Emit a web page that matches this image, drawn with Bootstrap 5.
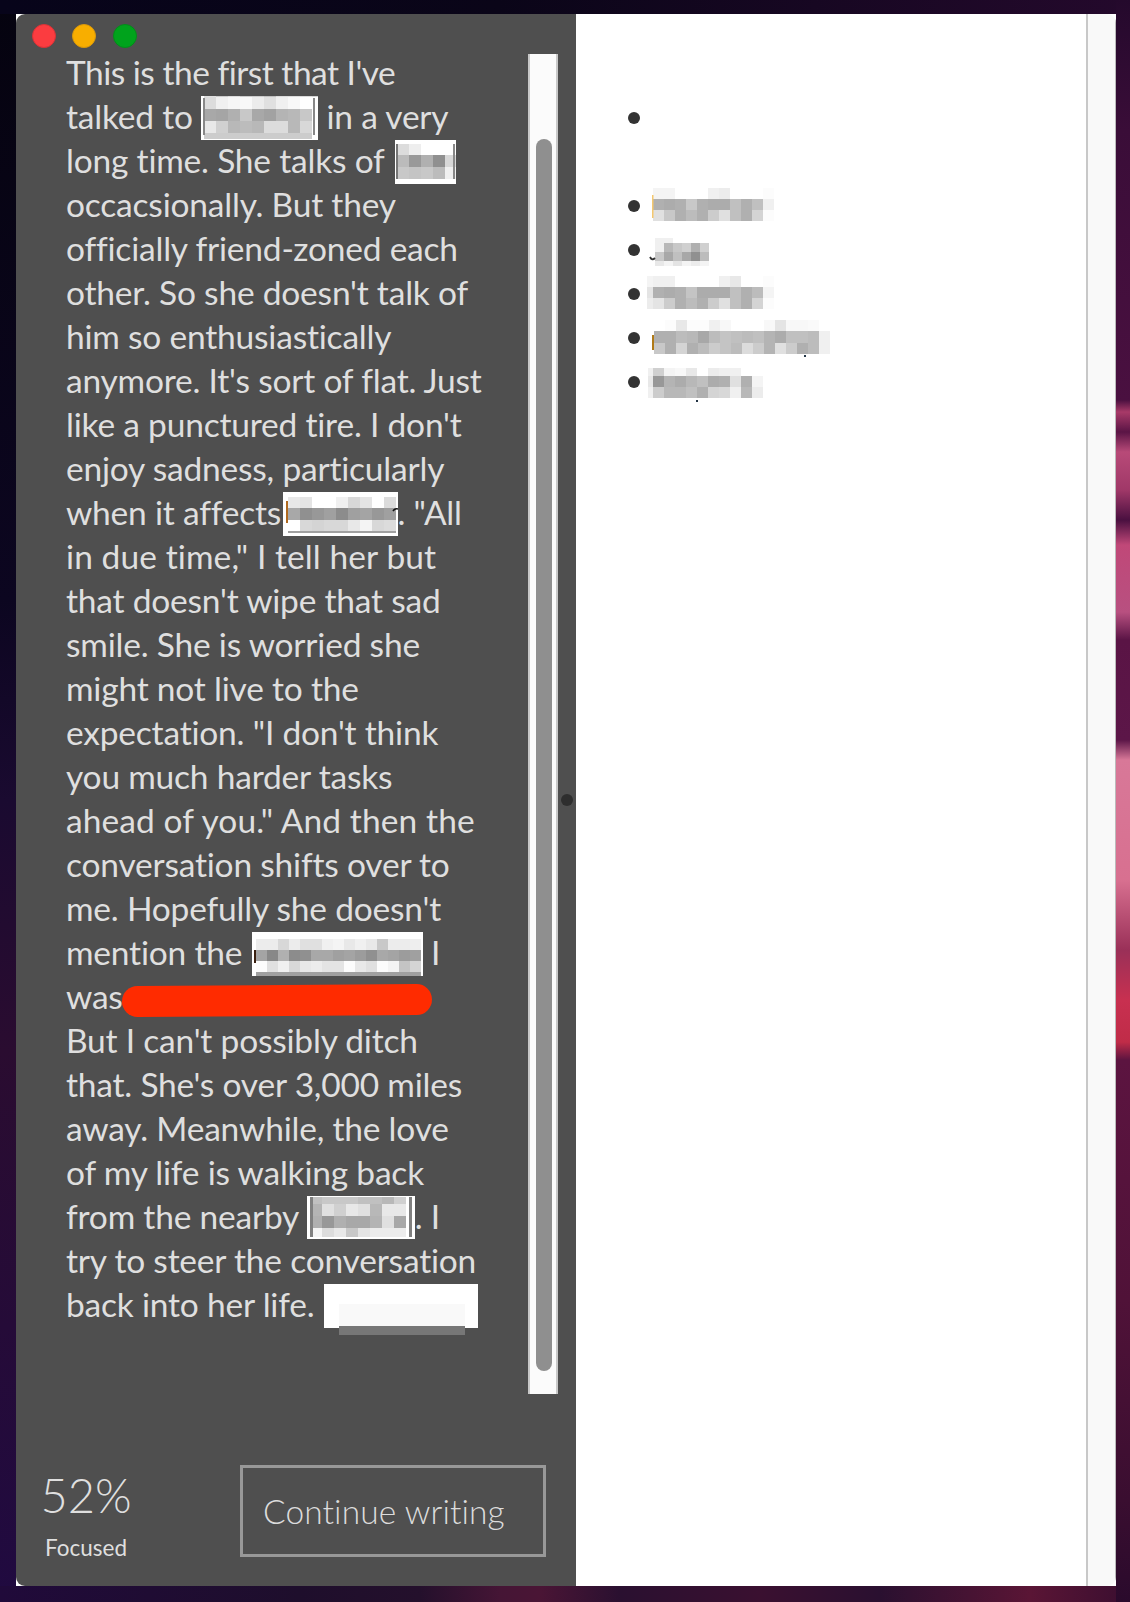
<!DOCTYPE html>
<html lang="en">
<head>
<meta charset="utf-8">
<title>Focused writing</title>
<link href="https://cdn.jsdelivr.net/npm/bootstrap@5.3.0/dist/css/bootstrap.min.css" rel="stylesheet">
<style>
html,body{height:1602px;overflow:hidden}
body{margin:0;padding:14px 0 0 16px;background:
 linear-gradient(to bottom,#24092c 0,#3a0d38 130px,#4a1040 400px,#a83a68 412px,#5a1445 432px,#b84a78 452px,#a03868 490px,#4a1040 520px,#c04878 545px,#b85080 612px,#5a1445 640px,#5c1648 740px,#d87898 760px,#d87090 880px,#9a3058 950px,#c83050 1000px,#c02c48 1042px,#5c1440 1060px,#501238 1300px,#3a0e30 1500px,#2a0a2c 1602px) right top/14px 100% no-repeat,
 linear-gradient(to right,#200a3a 0,#1e0e2c 300px,#24102c 420px,#451535 500px,#4a1535 540px,#2a1030 620px,#3a1030 760px,#2a1030 880px,#5a1535 1030px,#3a0e30 1130px) left bottom/100% 16px no-repeat,
 linear-gradient(to right,#07041a 0,#0a0518 500px,#24092c 1130px) left top/100% 14px no-repeat,
 linear-gradient(to bottom,#05030f 0,#0c0620 600px,#1a0a30 800px,#2a0c30 1050px,#200a40 1602px) left top/16px 100% no-repeat;
 font-family:"Lato","Liberation Sans",sans-serif}
.app-win{width:1100px;height:1572px;border-radius:9px;overflow:hidden}
.write-pane{width:560px;background:#4f4f4f;color:#dfdfdf}
.lights{padding:10px 0 0 16px;height:38px;gap:16.4px}
.light{width:24px;height:24px;border-radius:50%;display:block}
.l-red{background:#fb3c40;border:1px solid #d93236}
.l-yel{background:#f8ae00;border:1px solid #d9980a}
.l-grn{background:#00a31c;border:1px solid #038c1a}
.story-row{height:1342px}
.story{width:512px;padding-left:50px;margin:-2px 0 0;font-size:33.5px;line-height:44px;white-space:nowrap;letter-spacing:-.2px}
.ls-t{letter-spacing:-.5px}
.ls-l{letter-spacing:.1px}
.mos{display:inline-block;vertical-align:top}
.story .mos{margin:2px 0 -2px}
.story .mos.m2{margin-left:3px}
.story .mos.m3{margin-left:-7px}
.story .mos.m4{margin-left:1px}
.story .mos.m6{margin-left:1px}
.mos-over{overflow:visible}
.pill-red{left:106px;top:935px;width:310px;height:31px;border-radius:16px;background:#ff2b00;transform:rotate(-.4deg)}
.track{width:30px;height:1340px;margin-top:2px;background:#fbfbfb;border-left:2px solid #c8c8c8;border-right:2px solid #c8c8c8;padding:85px 0 0 6px}
.thumb{width:16px;height:1232px;background:#8f8f8f;border-radius:8px}
.knob{left:545px;top:780px;width:12px;height:12px;border-radius:50%;background:#2e2e2e}
.foot{padding:0 30px 20px 10px}
.stat{width:152px;height:101px;font-weight:300;padding-right:32px;padding-top:2px}
.stat-num{font-size:47px;line-height:56px}
.stat-lab{font-size:22.5px;line-height:30px;margin-top:10px;font-weight:400}
.go-btn{width:306px;height:92px;border:3px solid #989898;border-radius:0;color:#dcdcdc;font-size:33.5px;font-weight:300;background:transparent;letter-spacing:.1px;padding:0 0 0 20px;text-align:left}
.note-pane{width:510px;padding:82px 0 0 52px;color:#333}
.note-row{height:44px}
.bul{width:12px;height:12px;border-radius:50%;background:#333;flex:none;margin-right:2px}
.note-gap{height:44px}
.rail{flex:1;background:#f9f9f9;border-left:2px solid #c8c8c8;border-right:1px solid #bbb}
</style>
</head>
<body>
<div class="app-win d-flex bg-white">
  <div class="write-pane d-flex flex-column position-relative">
    <div class="lights d-flex">
      <span class="light l-red"></span><span class="light l-yel"></span><span class="light l-grn"></span>
    </div>
    <div class="story-row d-flex">
      <p class="story position-relative"><span class="ls-t">This is the first that I've</span><br>
talked to <svg class="mos" width="117" height="44" data-x="3" data-c="12" data-h="1,12,12,12,6" data-g="e0ccdcccccc0dcdcdcd4|dcf0f6f8ece0f0f8ff|a8a5b0c8a8a2b4b8c8|e8d0b8bcb8dcdcb8d8|cccccccccccccccccc"><rect x="2" y="2" width="2" height="37" fill="#888"/><rect x="112" y="2" width="2" height="37" fill="#888"/></svg> in a very<br>
long time. She talks of <svg class="mos m2" width="61" height="44" data-x="2" data-c="12" data-h="4,11,12,12" data-g="ffffffffff|dceeffffff|bb99b090d8|c8c4c8bcf0"><rect x="1" y="4" width="2" height="35" fill="#777"/><rect x="58" y="4" width="2" height="35" fill="#888"/></svg><br>
occacsionally. But they<br>
officially friend-zoned each<br>
other. So she doesn't talk of<br>
him so enthusiastically<br>
anymore. It's sort of flat. Just<br>
like a punctured tire. I don't<br>
enjoy sadness, particularly<br>
when it affects <svg class="mos m3" width="115" height="44" data-x="5" data-c="12" data-h="5,11,12,11,2" data-g="ffffffffffffffffff|e8e4fffff0d8e4ffdc|a8909 8a08ca0a498a0|ffd8d4d8d8e8f4d8dc|a0a0a0a0a0a0a0a0a0"><rect x="3" y="9" width="2" height="22" fill="#b06a20"/><path d="M110 19q2-3 5-2" fill="none" stroke="#111" stroke-width="1.6"/></svg>. "All<br>
<span class="ls-l">in due time," I tell her but</span><br>
that doesn't wipe that sad<br>
smile. She is worried she<br>
might not live to the<br>
expectation. "I don't think<br>
you much harder tasks<br>
<span class="ls-l">ahead of you." And then the</span><br>
conversation shifts over to<br>
me. Hopefully she doesn't<br>
mention the <svg class="mos m4" width="171" height="44" data-x="4" data-c="11" data-h="7,11,11,11,4" data-g="ffffffffffffffffffffffffffffff|ececd8ece0e0f0f4e8f0e8c8ececee|a488b08c90a8a8a0a49c90a8a49ca0|fce0f0d8e8ece4e4fce8e0fcf4c4d4|a0a0a0a0a0a0a0a0a0a0a0a0a0a0a0"><rect x="2" y="18" width="2" height="13" fill="#3a2010"/></svg> I<br>
was<br>
But I can't possibly ditch<br>
that. She's over 3,000 miles<br>
away. Meanwhile, the love<br>
of my life is walking back<br>
from the nearby <svg class="mos" width="108" height="43" data-x="3" data-c="12" data-h="1,7,12,12,9" data-g="ffffffffffffffff|c0c8c8c8c0c0b8d0|b4e0d0e8e0b8e8e8|b098b0a8a8b4e0a8|f4dce8c8e4ececec"><rect x="3" y="1" width="3" height="40" fill="#808080"/><rect x="102" y="1" width="3" height="40" fill="#808080"/></svg>. I<br>
try to steer the conversation<br>
back into her life. <svg class="mos mos-over m6" width="154" height="44" data-x="15" data-c="126" data-h="20,22" data-g="ff|f9"><rect x="15" y="42" width="126" height="9" fill="#777"/></svg>
        <span class="pill-red position-absolute d-block"></span>
      </p>
      <div class="track"><div class="thumb"></div></div>
    </div>
    <span class="knob position-absolute"></span>
    <div class="foot mt-auto d-flex align-items-start">
      <div class="stat text-center">
        <div class="stat-num">52%</div>
        <div class="stat-lab">Focused</div>
      </div>
      <button type="button" class="btn go-btn ms-auto">Continue writing</button>
    </div>
  </div>
  <div class="note-pane">
    <div class="note-row d-flex align-items-center"><span class="bul"></span></div>
    <div class="note-gap"></div>
    <div class="note-row d-flex align-items-center"><span class="bul"></span>
      <svg class="mos" width="200" height="44" data-x="11" data-c="11" data-h="4,11,11,11" data-g="ffffffffffffffffffffff|f4f4fffffff0ecfffffffc|b0acb0c8b0acacc0b0c0f0|e0c8b0bcb0cce0c0b0d4fc"><rect x="10" y="11" width="1.5" height="23" fill="#f4c870"/></svg></div>
    <div class="note-row d-flex align-items-center"><span class="bul"></span>
      <svg class="mos" width="200" height="44" data-x="13" data-c="9" data-h="10,5,9,9,5" data-g="ffffffffffff|f0f0ffffffff|f0b8c8d0b0d0|c8a8c0a890bc|e8f4e4f4ecf4"><path d="M8 29q2 4 5 1" fill="none" stroke="#333" stroke-width="1.8"/></svg></div>
    <div class="note-row d-flex align-items-center"><span class="bul"></span>
      <svg class="mos" width="200" height="44" data-x="0" data-c="11" data-h="4,11,11,11" data-g="ffffffffffffffffffffffff|f4f0f0fffffffff0e8fffffc|e4b0acb0c4acacacc0b0bcf4|ece4ccb0bcb0cce0c0b0d4fc"><rect x="0" y="0" width="5" height="44" fill="#fff"/></svg></div>
    <div class="note-row d-flex align-items-center"><span class="bul"></span>
      <svg class="mos" width="200" height="44" data-x="12" data-c="11" data-h="4,11,12,11" data-g="ffffffffffffffffffffffffffffffff|fffce8fcfcf0f8fffffff8e4f8f8faff|b0b0bcb8a8bcc4c0bcc0b4acc0c0bcf0|c8b0d4b0bcccc4bcdcccb4e0ccb0bcf0"><rect x="10" y="19" width="2" height="15" fill="#b07a18"/><rect x="162" y="39" width="2" height="2" fill="#234"/></svg></div>
    <div class="note-row d-flex align-items-center"><span class="bul"></span>
      <svg class="mos" width="200" height="44" data-x="0" data-c="11" data-h="8,8,11,11" data-g="ffffffffffffffffffffff|f0d0f4f8e8ffecf0f0ffff|e898b4acb8c0acb0e0b0f4|f0ccb8b8c0b0d4d8f0b8ec"><rect x="0" y="0" width="6" height="44" fill="#fff"/><rect x="54" y="40" width="2" height="2" fill="#234"/></svg></div>
  </div>
  <div class="rail"></div>
</div>
<script>
document.querySelectorAll('svg.mos').forEach(function(s){
  var x0=+s.dataset.x,c=+s.dataset.c,hs=s.dataset.h.split(',').map(Number),rows=s.dataset.g.replace(/ /g,'').split('|');
  var w=+s.getAttribute('width'),h=+s.getAttribute('height'),ns='http://www.w3.org/2000/svg';
  var first=s.firstChild,add=function(x,y,rw,rh,f){var r=document.createElementNS(ns,'rect');r.setAttribute('x',x);r.setAttribute('y',y);r.setAttribute('width',rw);r.setAttribute('height',rh);r.setAttribute('fill',f);s.insertBefore(r,first);};
  add(0,0,w,h,'#fff');
  var y=0;
  rows.forEach(function(row,i){
    for(var k=0;k*2<row.length;k++){var g=row.substr(k*2,2);add(x0+k*c,y,c,hs[i],'#'+g+g+g);}
    y+=hs[i];
  });
});
</script>
<script src="https://cdn.jsdelivr.net/npm/bootstrap@5.3.0/dist/js/bootstrap.bundle.min.js"></script>
</body>
</html>
